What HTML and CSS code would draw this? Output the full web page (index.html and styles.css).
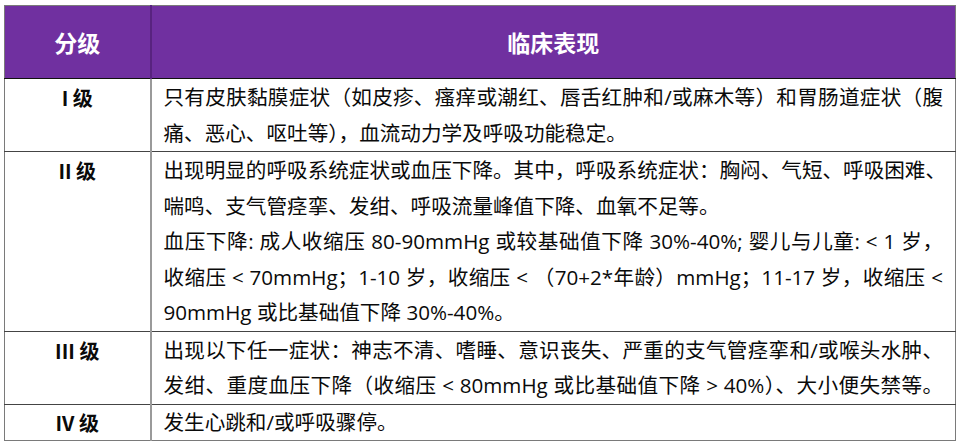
FILE: index.html
```html
<!DOCTYPE html>
<html lang="zh-CN">
<head>
<meta charset="utf-8">
<title>分级与临床表现</title>
<link rel="stylesheet" href="styles.css">
</head>
<body>
<table class="grade-table">
  <colgroup><col class="c1"><col class="c2"></colgroup>
  <thead>
    <tr><th>分级</th><th>临床表现</th></tr>
  </thead>
  <tbody>
    <tr class="r1">
      <td class="lvl">I 级</td>
      <td class="desc">
        <span class="ln j">只有皮肤黏膜症状（如皮疹、瘙痒或潮红、唇舌红肿和/或麻木等）和胃肠道症状（腹</span>
        <span class="ln">痛、恶心、呕吐等），血流动力学及呼吸功能稳定。</span>
      </td>
    </tr>
    <tr class="r2">
      <td class="lvl">II 级</td>
      <td class="desc">
        <span class="ln j">出现明显的呼吸系统症状或血压下降。其中，呼吸系统症状：胸闷、气短、呼吸困难、</span>
        <span class="ln">喘鸣、支气管痉挛、发绀、呼吸流量峰值下降、血氧不足等。</span>
        <span class="ln j">血压下降: 成人收缩压 80-90mmHg 或较基础值下降 30%-40%; 婴儿与儿童: &lt; 1 岁，</span>
        <span class="ln j">收缩压 &lt; 70mmHg；1-10 岁，收缩压 &lt; （70+2*年龄）mmHg；11-17 岁，收缩压 &lt;</span>
        <span class="ln">90mmHg 或比基础值下降 30%-40%。</span>
      </td>
    </tr>
    <tr class="r3">
      <td class="lvl">III 级</td>
      <td class="desc">
        <span class="ln j">出现以下任一症状：神志不清、嗜睡、意识丧失、严重的支气管痉挛和/或喉头水肿、</span>
        <span class="ln j">发绀、重度血压下降（收缩压 &lt; 80mmHg 或比基础值下降 &gt; 40%）、大小便失禁等。</span>
      </td>
    </tr>
    <tr class="r4">
      <td class="lvl">IV 级</td>
      <td class="desc">
        <span class="ln">发生心跳和/或呼吸骤停。</span>
      </td>
    </tr>
  </tbody>
</table>
</body>
</html>
```
FILE: styles.css
```css
html, body {
  margin: 0;
  padding: 0;
  background: #ffffff;
}
body {
  padding: 5px 0 0 4px;
  font-family: "Noto Sans CJK SC", "Noto Sans", sans-serif;
  color: #0a0a0a;
}
.grade-table {
  border-collapse: collapse;
  width: 951px;
  table-layout: fixed;
  border: 1.5px solid #7a7a7a;
}
.c1 { width: 146px; }
.c2 { width: 805px; }
thead th {
  background: #7030a0;
  color: #ffffff;
  font-weight: 700;
  font-size: 23px;
  height: 72px;
  padding: 0;
  text-align: center;
  vertical-align: middle;
  border-bottom: 1px solid #111;
}
thead th:first-child {
  border-right: 2px solid #58237f;
}
tbody td {
  vertical-align: top;
  border-bottom: 1px solid #444;
  padding: 1px 0 0;
  font-size: 20.6px;
  line-height: 35.5px;
}
tbody tr:last-child td {
  border-bottom: none;
}
td.lvl {
  text-align: center;
  font-weight: 700;
  font-size: 20px;
  border-right: 2px solid #9a9a9a;
}
td.desc {
  padding: 1px 12px 0 12px;
  font-family: "Open Sans", "Noto Sans CJK SC", sans-serif;
}
.ln {
  display: block;
  white-space: nowrap;
}
.ln.j {
  text-align: justify;
  text-align-last: justify;
}
.r4 td { padding-top: 0; }
```
